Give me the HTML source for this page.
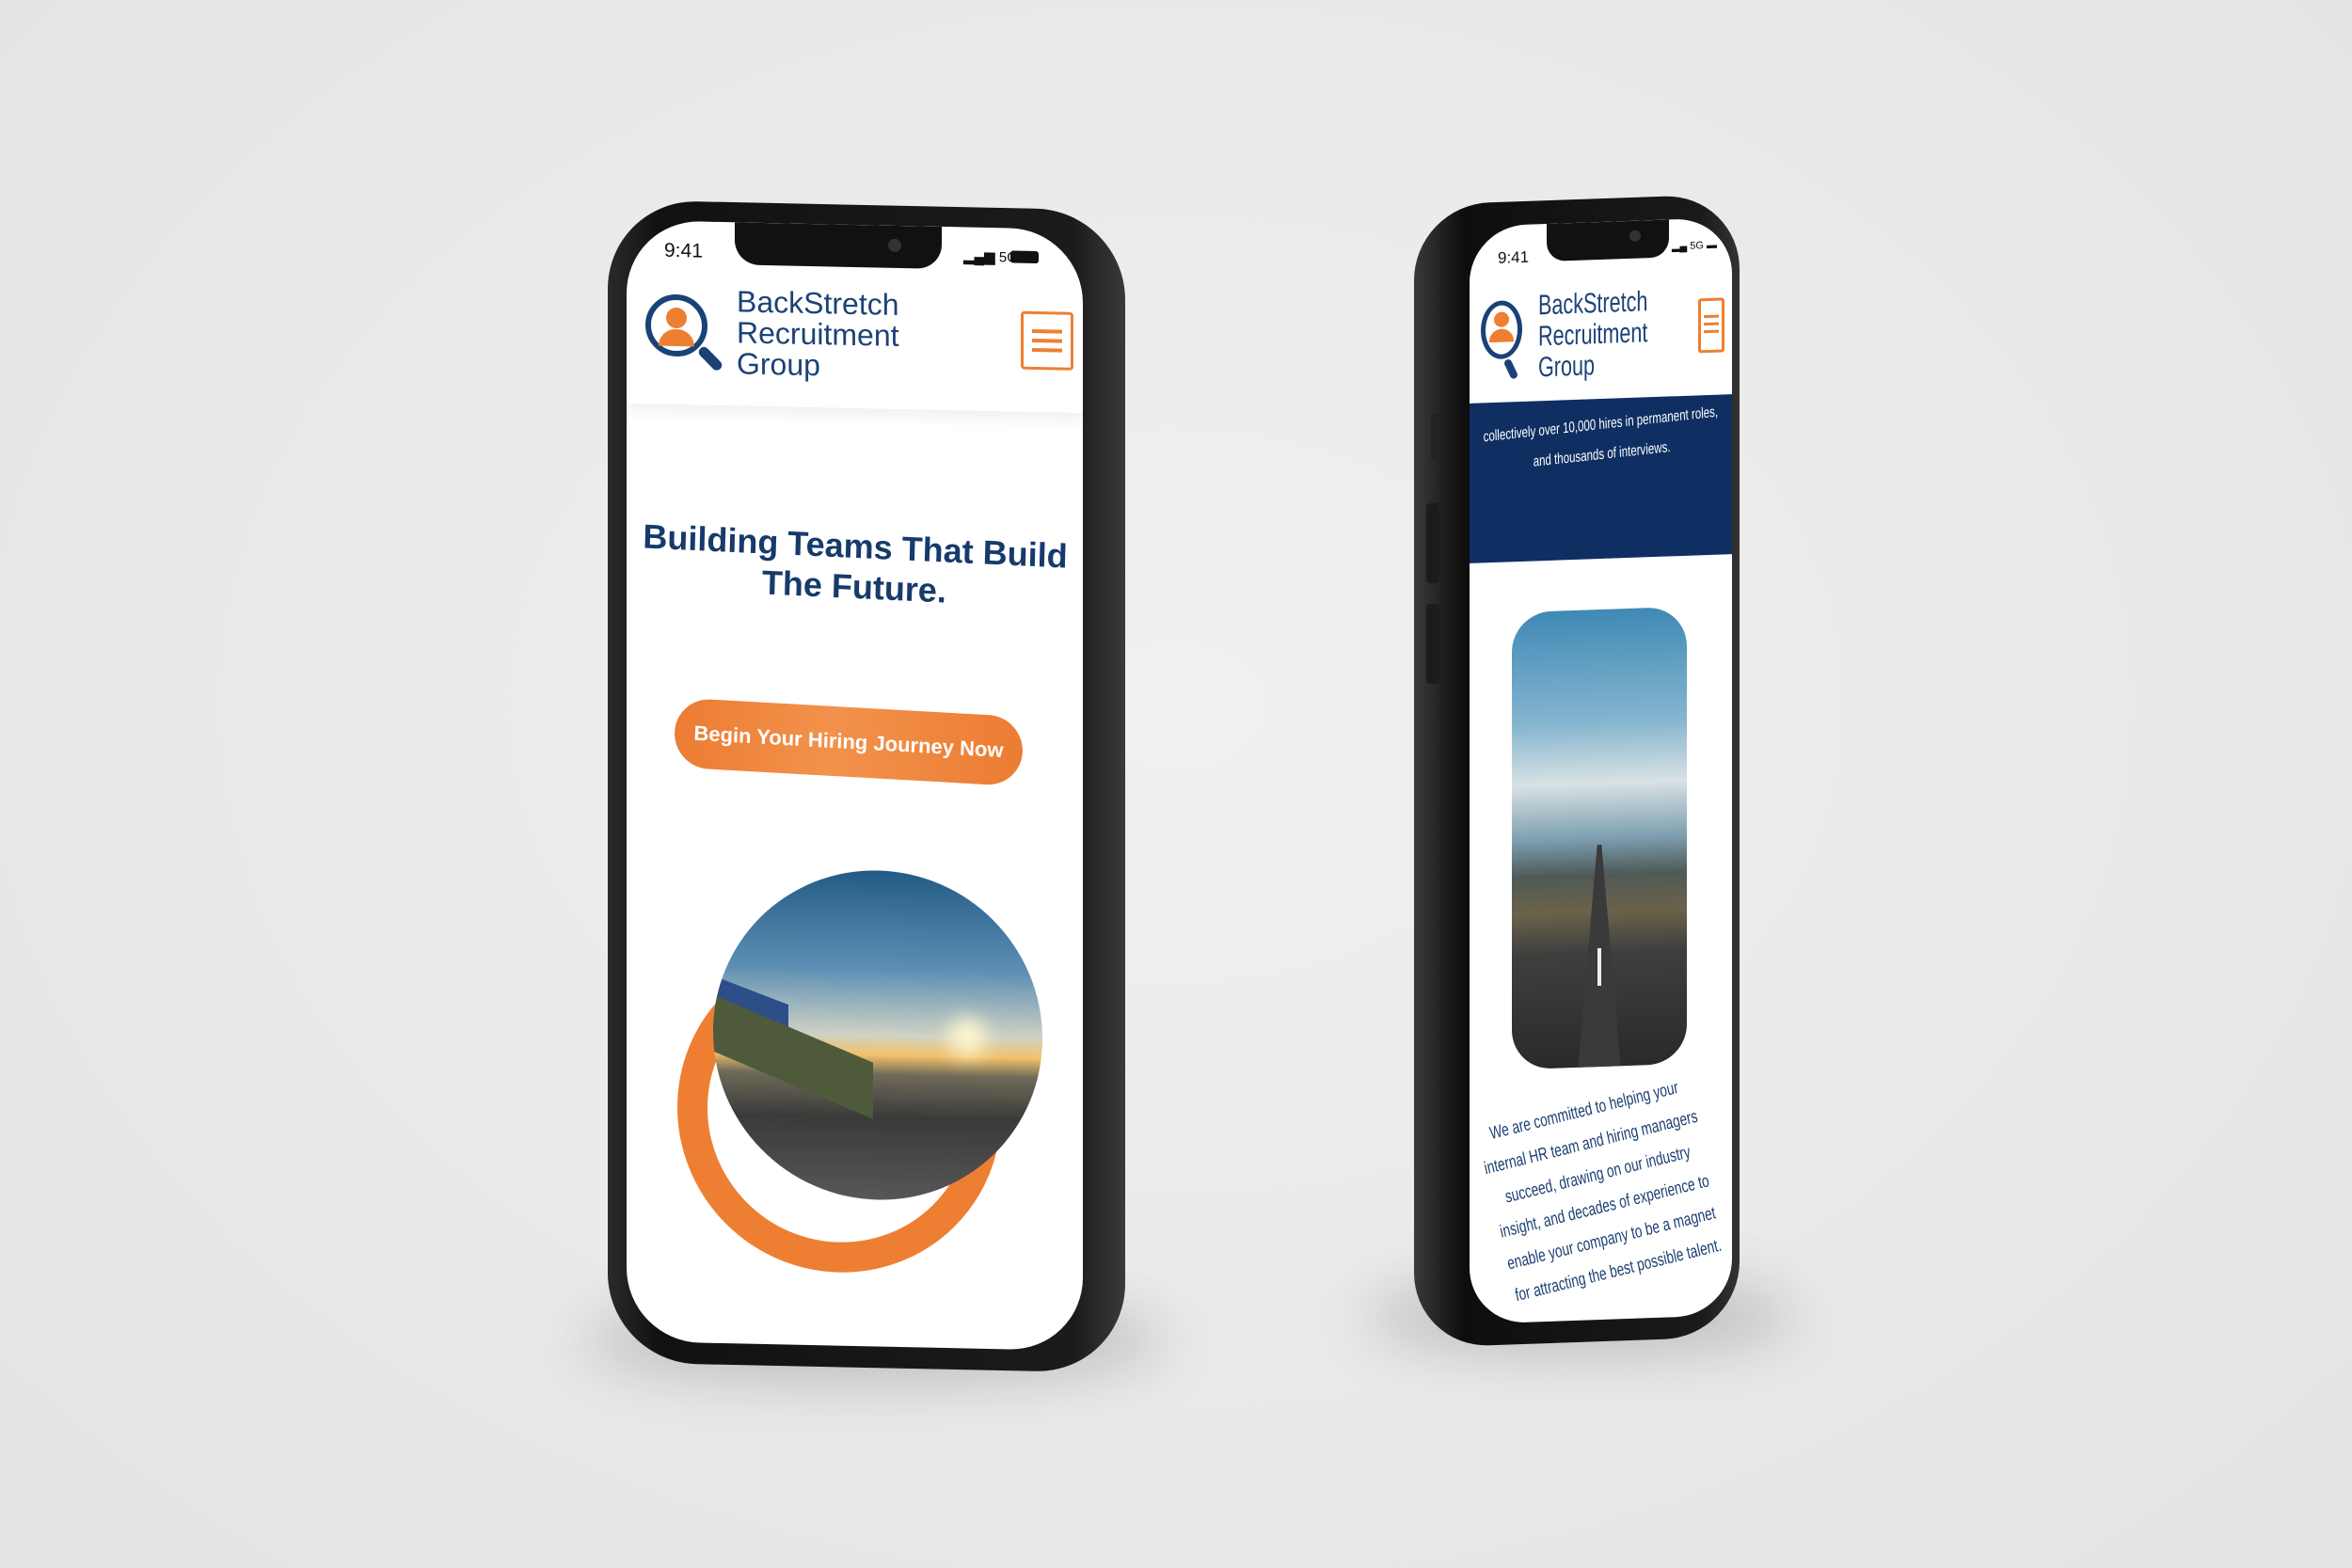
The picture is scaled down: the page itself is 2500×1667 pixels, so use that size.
<!DOCTYPE html>
<html><head><meta charset="utf-8">
<style>
*{margin:0;padding:0;box-sizing:border-box}
body{width:2500px;height:1667px;overflow:hidden;background:radial-gradient(ellipse at 50% 45%,#f0f0f0 0%,#e9e9e9 60%,#e3e3e3 100%);font-family:"Liberation Sans",sans-serif;position:relative}
.abs{position:absolute}
.shadow{position:absolute;border-radius:50%;filter:blur(30px);background:rgba(0,0,0,.18)}
</style></head><body>

<div class="shadow" style="left:620px;top:1380px;width:620px;height:90px"></div>
<div class="shadow" style="left:1450px;top:1360px;width:460px;height:80px"></div>

<!-- LEFT PHONE -->
<div class="abs" style="left:646px;top:218px;width:550px;height:1236px;border-radius:95px;background:linear-gradient(90deg,#2a2a2a,#111 10%,#1b1b1b 90%,#3a3a3a);transform:skewY(1.2deg)"></div>
<div class="abs" style="left:666px;top:239px;width:485px;height:1192px;border-radius:78px;background:#fff;overflow:hidden;transform:skewY(1.2deg)">
  <div class="abs" style="left:40px;top:20px;font-size:21px;color:#111">9:41</div>
  <div class="abs" style="left:115px;top:0;width:220px;height:45px;background:#111;border-radius:0 0 26px 26px"></div>
  <div class="abs" style="left:278px;top:14px;width:14px;height:14px;border-radius:50%;background:#333"></div>
  <div class="abs" style="left:358px;top:22px;font-size:15px;color:#111">▂▄▆ 5G</div>
  <div class="abs" style="left:408px;top:24px;width:30px;height:13px;border-radius:3px;background:#111"></div>
  <div class="abs" style="left:0;top:0;width:485px;height:195px;box-shadow:0 8px 14px rgba(0,0,0,.06)"></div>
  <div class="abs" style="left:20px;top:78px;width:66px;height:66px;border-radius:50%;border:6px solid #1b4277;background:#fff"></div>
  <div class="abs" style="left:42px;top:92px;width:22px;height:22px;border-radius:50%;background:#ee7f32"></div>
  <div class="abs" style="left:34px;top:115px;width:38px;height:18px;border-radius:19px 19px 0 0;background:#ee7f32"></div>
  <div class="abs" style="left:74px;top:140px;width:30px;height:11px;border-radius:6px;background:#1b4277;transform:rotate(45deg)"></div>
  <div class="abs" style="left:117px;top:68px;font-size:32px;line-height:33px;color:#1b4277">BackStretch<br>Recruitment<br>Group</div>
  <div class="abs" style="left:419px;top:88px;width:56px;height:62px;border:3px solid #ee7f32;border-radius:4px"></div>
  <div class="abs" style="left:431px;top:107px;width:32px;height:4px;background:#ee7f32;box-shadow:0 10px 0 #ee7f32,0 20px 0 #ee7f32"></div>
  <div class="abs" style="left:0;top:320px;width:485px;text-align:center;font-size:36px;line-height:43px;color:#163a6b;font-weight:bold;transform:rotate(1.5deg)">Building Teams That Build<br>The Future.</div>
  <div class="abs" style="left:51px;top:513px;width:370px;height:74px;border-radius:37px;background:linear-gradient(90deg,#ec7c33,#f2924c 45%,#ec7c33);color:#fff;font-size:22px;line-height:74px;text-align:center;font-weight:bold;transform:rotate(2deg)">Begin Your Hiring Journey Now</div>
  <div class="abs" style="left:54px;top:770px;width:344px;height:344px;border-radius:50%;border:32px solid #ee7f32"></div>
  <div class="abs" style="left:92px;top:686px;width:350px;height:350px;border-radius:50%;overflow:hidden;background:linear-gradient(180deg,#235b86 0%,#5d8fb4 30%,#cfd2c4 50%,#f3c26a 56%,#6f6a58 62%,#3a3a3a 75%,#575757 100%)">
    <div class="abs" style="left:0;top:130px;width:80px;height:60px;background:#2c4f8a;transform:skewY(20deg)"></div>
    <div class="abs" style="left:0;top:170px;width:170px;height:60px;background:#4f5a3a;transform:skewY(22deg)"></div>
    <div class="abs" style="left:250px;top:155px;width:40px;height:40px;border-radius:50%;background:#fff6d0;filter:blur(10px)"></div>
  </div>
</div>

<!-- RIGHT PHONE -->
<div class="abs" style="left:1503px;top:212px;width:346px;height:1215px;border-radius:80px;background:linear-gradient(90deg,#3a3a3a,#0e0e0e 15%,#1a1a1a 88%,#333);transform:skewY(-2deg)"></div>
<div class="abs" style="left:1521px;top:440px;width:12px;height:50px;border-radius:4px;background:#222"></div>
<div class="abs" style="left:1516px;top:535px;width:14px;height:85px;border-radius:4px;background:#1c1c1c"></div>
<div class="abs" style="left:1516px;top:642px;width:14px;height:85px;border-radius:4px;background:#1c1c1c"></div>
<div class="abs" style="left:1562px;top:236px;width:279px;height:1167px;border-radius:60px;background:#fff;overflow:hidden;transform:skewY(-2deg)">
  <div class="abs" style="left:30px;top:25px;font-size:17px;color:#111">9:41</div>
  <div class="abs" style="left:82px;top:0;width:130px;height:40px;background:#111;border-radius:0 0 20px 20px"></div>
  <div class="abs" style="left:170px;top:10px;width:12px;height:12px;border-radius:50%;background:#333"></div>
  <div class="abs" style="left:215px;top:22px;font-size:11px;color:#111">▂▄ 5G ▬</div>
  <div class="abs" style="left:12px;top:80px;width:44px;height:62px;border-radius:50%;border:5px solid #1b4277"></div>
  <div class="abs" style="left:26px;top:92px;width:16px;height:16px;border-radius:50%;background:#ee7f32"></div>
  <div class="abs" style="left:21px;top:110px;width:26px;height:14px;border-radius:13px 13px 0 0;background:#ee7f32"></div>
  <div class="abs" style="left:40px;top:142px;width:8px;height:22px;border-radius:4px;background:#1b4277;transform:rotate(-25deg)"></div>
  <div class="abs" style="left:73px;top:70px;font-size:30px;line-height:33px;color:#1b4277;transform:scaleX(.72);transform-origin:left">BackStretch<br>Recruitment<br>Group</div>
  <div class="abs" style="left:243px;top:85px;width:28px;height:58px;border:3px solid #ee7f32;border-radius:3px"></div>
  <div class="abs" style="left:249px;top:103px;width:16px;height:3px;background:#ee7f32;box-shadow:0 8px 0 #ee7f32,0 16px 0 #ee7f32"></div>
  <div class="abs" style="left:0;top:188px;width:279px;height:170px;background:#0f2f63"></div>
  <div class="abs" style="left:-60px;top:200px;width:400px;text-align:center;color:#fff;font-size:16px;line-height:32px;white-space:nowrap;transform:scaleX(.72) rotate(-3deg)">collectively over 10,000 hires in permanent roles,<br>and thousands of interviews.</div>
  <div class="abs" style="left:45px;top:412px;width:186px;height:486px;border-radius:42px;overflow:hidden;background:linear-gradient(180deg,#3f89b6 0%,#87b6cf 25%,#d8e2e4 38%,#7d9fb0 50%,#4e5a57 58%,#6b6249 66%,#3f3f3f 75%,#2a2a2a 100%)">
    <div class="abs" style="left:70px;top:250px;width:46px;height:240px;background:#3a3a3a;clip-path:polygon(45% 0,55% 0,100% 100%,0 100%)"></div>
    <div class="abs" style="left:91px;top:360px;width:4px;height:40px;background:#eee"></div>
  </div>
  <div class="abs" style="left:-40px;top:925px;width:360px;text-align:center;color:#1b3f72;font-size:19px;line-height:35px;transform:rotate(-12deg) scaleX(.72)">We are committed to helping your<br>internal HR team and hiring managers<br>succeed, drawing on our industry<br>insight, and decades of experience to<br>enable your company to be a magnet<br>for attracting the best possible talent.</div>
</div>
</body></html>
